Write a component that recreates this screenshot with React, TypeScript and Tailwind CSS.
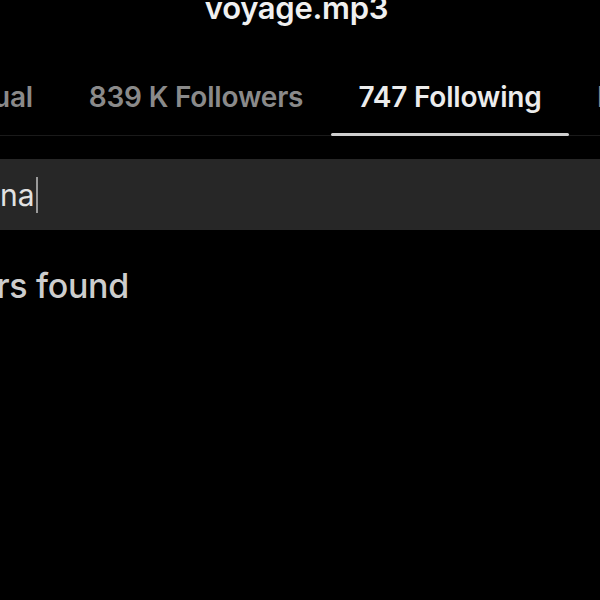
const font = { fontFamily: 'Inter, "Liberation Sans", sans-serif' }

function Tab({ label, active, width }: { label: string; active?: boolean; width: string }) {
  return (
    <div className={`relative flex h-full shrink-0 items-center justify-center pt-1 ${width}`}>
      <span
        className={`whitespace-nowrap text-[28px] font-semibold tracking-[-0.2px] ${
          active ? 'text-[#ececec]' : 'text-[#8a8a8a]'
        }`}
      >
        {label}
      </span>
      {active && <div className="absolute bottom-[-1px] left-0 right-0 h-[3px] rounded-full bg-[#cfcfcf]" />}
    </div>
  )
}

export default function App() {
  return (
    <div className="h-[600px] w-[600px] overflow-hidden bg-black" style={font}>
      {/* header */}
      <div className="-mt-[8px] flex h-[44px] justify-center">
        <span className="mr-[7px] text-[31px] font-semibold leading-none tracking-[-0.3px] text-[#f0f0f0]">voyage.mp3</span>
      </div>

      {/* tabs */}
      <div className="mt-[18px] flex h-[82px] border-b border-[#1a1a1a]">
        <div className="flex h-full w-[61px] shrink-0 items-center justify-end pr-7 pt-1">
          <span className="whitespace-nowrap text-[28px] font-semibold tracking-[-0.2px] text-[#8a8a8a]">Mutual</span>
        </div>
        <Tab label="839 K Followers" width="w-[270px]" />
        <Tab label="747 Following" width="w-[238px]" active />
        <div className="flex h-full shrink-0 items-center pl-7 pt-1">
          <span className="whitespace-nowrap text-[28px] font-semibold tracking-[-0.2px] text-[#8a8a8a]">Related</span>
        </div>
      </div>

      {/* search */}
      <div className="mt-[23px] flex h-[71px] items-center bg-[#272727]">
        <span className="text-[30px] leading-none text-[#e2e2e2]">na</span>
        <span className="ml-[1px] h-[36px] w-[2px] bg-[#9a9a9a]" />
      </div>

      {/* result */}
      <div className="mt-[39px] flex justify-end" style={{ width: 129 }}>
        <span className="whitespace-nowrap text-[34px] font-medium leading-none tracking-[-0.3px] text-[#cdcdcd]">No users found</span>
      </div>
    </div>
  )
}
